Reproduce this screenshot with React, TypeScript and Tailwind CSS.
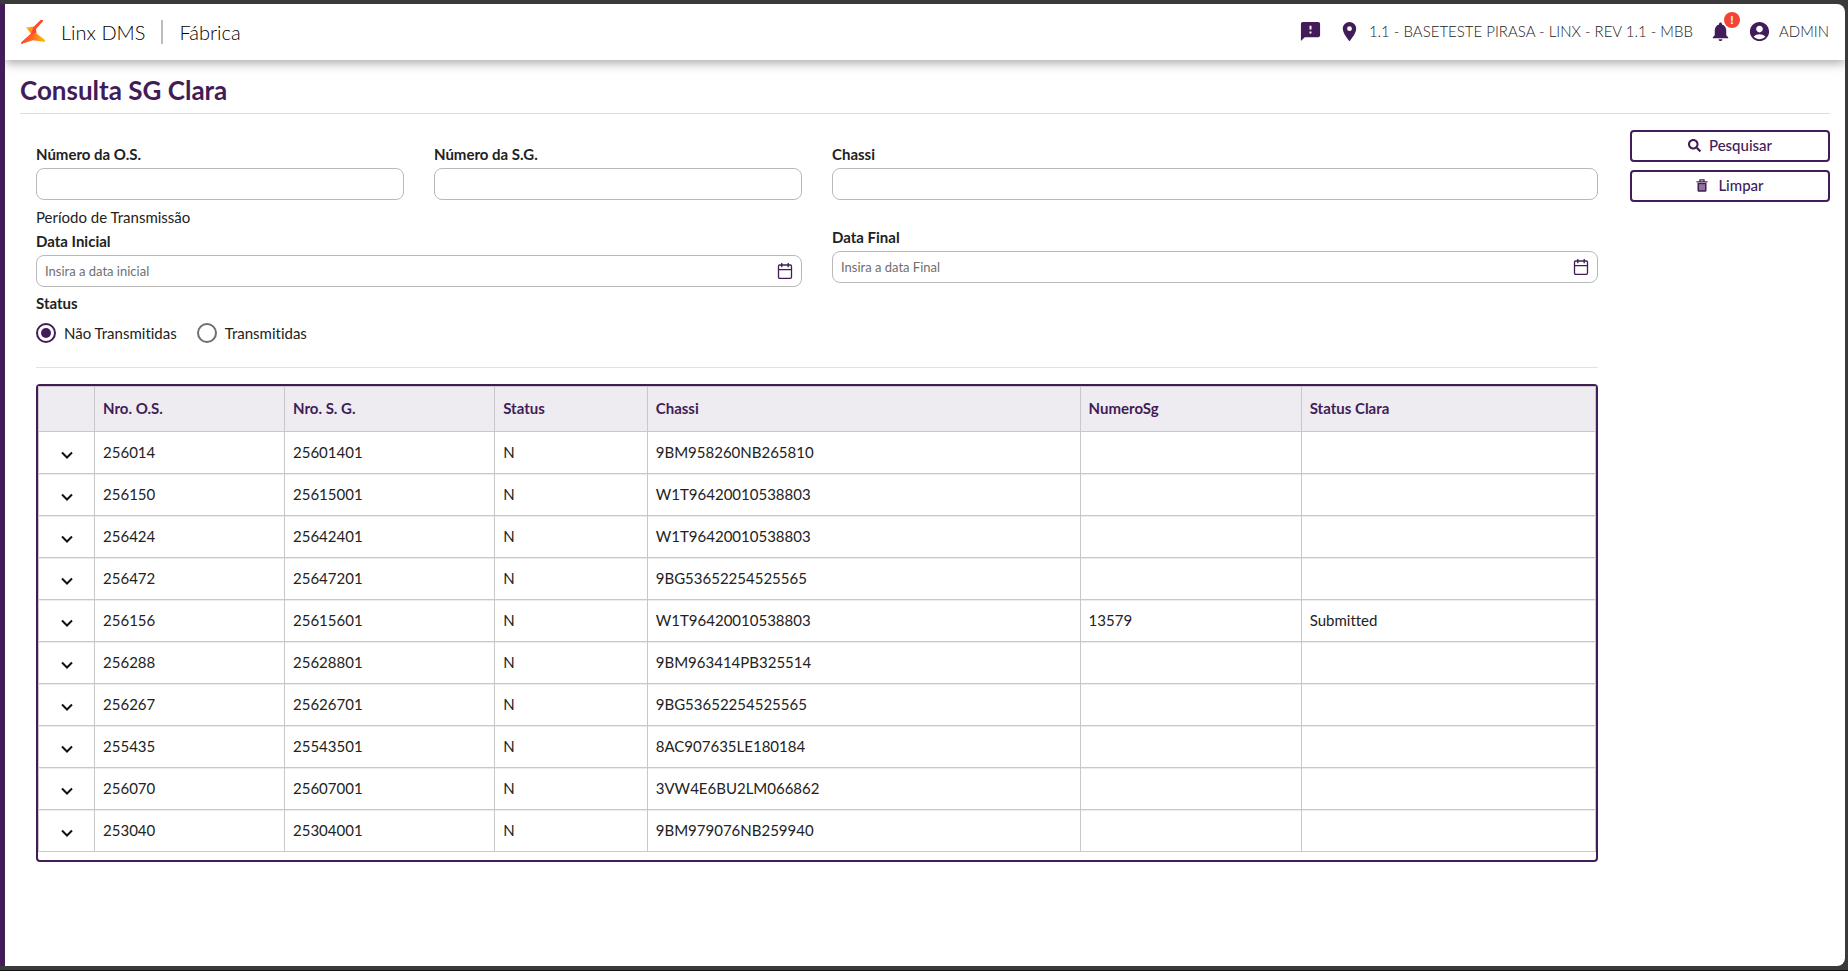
import React, { useState } from 'react';
import { MdFeedback, MdLocationOn, MdNotifications, MdAccountCircle } from 'react-icons/md';
import { FaSearch } from 'react-icons/fa';

interface Order {
  os: string;
  sg: string;
  status: string;
  chassi: string;
  numeroSg?: string;
  statusClara?: string;
}

const orders: Order[] = [
  { os: '256014', sg: '25601401', status: 'N', chassi: '9BM958260NB265810' },
  { os: '256150', sg: '25615001', status: 'N', chassi: 'W1T96420010538803' },
  { os: '256424', sg: '25642401', status: 'N', chassi: 'W1T96420010538803' },
  { os: '256472', sg: '25647201', status: 'N', chassi: '9BG53652254525565' },
  { os: '256156', sg: '25615601', status: 'N', chassi: 'W1T96420010538803', numeroSg: '13579', statusClara: 'Submitted' },
  { os: '256288', sg: '25628801', status: 'N', chassi: '9BM963414PB325514' },
  { os: '256267', sg: '25626701', status: 'N', chassi: '9BG53652254525565' },
  { os: '255435', sg: '25543501', status: 'N', chassi: '8AC907635LE180184' },
  { os: '256070', sg: '25607001', status: 'N', chassi: '3VW4E6BU2LM066862' },
  { os: '253040', sg: '25304001', status: 'N', chassi: '9BM979076NB259940' },
];

const columns = ['Nro. O.S.', 'Nro. S. G.', 'Status', 'Chassi', 'NumeroSg', 'Status Clara'];

const Logo = () => (
  <svg viewBox="0 0 24 24" className="size-6" aria-hidden="true">
    <defs>
      <linearGradient id="wing" x1="0" y1="0" x2="1" y2="0.4">
        <stop offset="0" stopColor="#ffc20e" />
        <stop offset="1" stopColor="#ff7a1a" />
      </linearGradient>
      <linearGradient id="foot" x1="0" y1="0" x2="1" y2="0">
        <stop offset="0" stopColor="#ff4b2b" />
        <stop offset="0.5" stopColor="#ff6a22" />
        <stop offset="1" stopColor="#ffc400" />
      </linearGradient>
    </defs>
    <path d="M5 7.5 L14 6.5 L15 13 L10 13.5 Z" fill="url(#wing)" />
    <path d="M22 0 H19.5 L12.5 7 L10 13.5 L0 22.5 V24 L11 19.5 L15.5 13 L15 9 L22 1.2 Z" fill="#ff4a2a" />
    <path d="M0 24 L9.5 15.5 L14.5 12.8 L24 20 V22 L12 20.3 Z" fill="url(#foot)" />
  </svg>
);

const CalendarIcon = () => (
  <svg viewBox="0 0 16 18" className="h-[18px] w-4" fill="none" stroke="#411c58" strokeWidth="1.3" aria-hidden="true">
    <rect x="1.5" y="3" width="13" height="13.3" rx="1.2" />
    <path d="M1.5 7.7h13M4.8 1v4.2M11.2 1v4.2" />
  </svg>
);

const TrashIcon = () => (
  <svg viewBox="0 0 12 13" className="mr-0.5 h-[13px] w-3" aria-hidden="true">
    <path d="M1.5 4h9v7.6a1.2 1.2 0 0 1-1.2 1.2H2.7a1.2 1.2 0 0 1-1.2-1.2z" fill="#411c58" />
    <path d="M0.5 2.8h11M4 2.5V0.8h4v1.7" stroke="#411c58" strokeWidth="1.3" fill="none" />
    <path d="M4 5.2v6M6 5.2v6M8 5.2v6" stroke="#fff" strokeWidth="0.8" />
  </svg>
);

const Chevron = () => (
  <svg viewBox="0 0 12 8" className="h-2 w-3" fill="none" stroke="#111" strokeWidth="2" aria-hidden="true">
    <path d="M1 1.5l5 5 5-5" />
  </svg>
);

const inputClass = 'h-8 w-full rounded-lg border border-[#b9b9b9] bg-white px-2 text-[13px] text-[#222] outline-none placeholder:text-[#6f6f6f]';
const labelClass = 'mb-1 block text-[15px] leading-5 font-bold';
const cellClass = 'border border-[#c8c8c8] px-2 pb-0.5';

const Field = ({ id, label, className = '' }: any) => (
  <div className={className}>
    <label htmlFor={id} className={labelClass}>{label}</label>
    <input id={id} type="text" className={inputClass} />
  </div>
);

const DateField = ({ id, label, placeholder }: any) => (
  <div>
    <label htmlFor={id} className={labelClass}>{label}</label>
    <div className="relative">
      <input id={id} type="text" placeholder={placeholder} className={inputClass} />
      <button type="button" aria-label="Abrir calendário" className="absolute top-[7px] right-[9px]">
        <CalendarIcon />
      </button>
    </div>
  </div>
);

const StatusRadio = ({ label, checked, onChange }: any) => (
  <label className="flex items-center gap-2 text-[15px] leading-5">
    <input
      type="radio"
      name="status"
      checked={checked}
      onChange={onChange}
      className="size-5 appearance-none rounded-full border-2 border-[#6f6f6f] bg-clip-content p-[3px] checked:border-[#411c58] checked:bg-[#411c58]"
    />
    {label}
  </label>
);

const ActionButton = ({ icon, label }: any) => (
  <button type="button" className="flex h-8 w-full items-center justify-center gap-2 rounded border-2 border-[#411c58] bg-white pb-0.5 text-[15px] leading-5 font-medium text-[#411c58]">
    {icon}
    {label}
  </button>
);

const Header = () => (
  <header className="relative flex h-14 items-center justify-between px-4 shadow-[0_3px_10px_rgba(0,0,0,0.35)]">
    <div className="flex items-center text-xl leading-8 font-light text-black">
      <Logo />
      <span className="ml-4">Linx DMS</span>
      <span className="mx-4 h-6 w-0.5 bg-[#bdbdbd]" />
      <span>Fábrica</span>
    </div>
    <div className="flex items-center pb-0.5 text-[15px] leading-5 font-light text-[#222]">
      <MdFeedback size={23} color="#411c58" />
      <MdLocationOn size={23} color="#411c58" className="mr-2 ml-4" />
      <span>1.1 - BASETESTE PIRASA - LINX - REV 1.1 - MBB</span>
      <button type="button" aria-label="Notificações" className="relative ml-4">
        <MdNotifications size={23} color="#411c58" />
        <span className="absolute -top-2 -right-2 flex size-4 items-center justify-center rounded-full bg-[#f44336] text-xs font-bold text-white">!</span>
      </button>
      <MdAccountCircle size={23} color="#411c58" className="mr-2 ml-4" />
      <span>ADMIN</span>
    </div>
  </header>
);

const OrdersTable = () => (
  <div className="rounded-sm border-2 border-[#411c58] pb-2">
    <table className="w-full table-fixed border-collapse text-left text-[15px] leading-5">
      <colgroup>
        <col className="w-[3.6%]" />
        <col className="w-[12.2%]" />
        <col className="w-[13.5%]" />
        <col className="w-[9.8%]" />
        <col className="w-[27.8%]" />
        <col className="w-[14.2%]" />
        <col className="w-[18.9%]" />
      </colgroup>
      <thead>
        <tr className="h-[45px] bg-[#efecf1] text-[#411c58]">
          <th className={cellClass} />
          {columns.map((name) => (
            <th key={name} className={cellClass}>{name}</th>
          ))}
        </tr>
      </thead>
      <tbody>
        {orders.map((order) => (
          <tr key={order.os} className="h-[42px] [&:not(:first-child)>td]:shadow-[inset_0_1px_#ececec]">
            <td className="border border-[#c8c8c8] text-center">
              <button type="button" aria-label="Expandir" className="align-middle">
                <Chevron />
              </button>
            </td>
            <td className={cellClass}>{order.os}</td>
            <td className={cellClass}>{order.sg}</td>
            <td className={cellClass}>{order.status}</td>
            <td className={cellClass}>{order.chassi}</td>
            <td className={cellClass}>{order.numeroSg}</td>
            <td className={cellClass}>{order.statusClara}</td>
          </tr>
        ))}
      </tbody>
    </table>
  </div>
);

export default function App() {
  const [status, setStatus] = useState('nao');

  return (
    <div className="flex min-h-screen flex-col border-b border-[#111] bg-[#3a3a3a] pt-1 pr-[3px] pb-1 font-['Lato','Liberation_Sans',sans-serif] text-[#222] [font-variant-ligatures:none]">
      <div className="flex-1 overflow-hidden rounded-r-lg border-l-[5px] border-[#411c58] bg-white">
        <Header />
        <main className="px-[15px]">
          <h1 className="border-b border-[#ddd] pt-[14px] pb-[7px] text-[26px] leading-8 font-bold text-[#411c58]">Consulta SG Clara</h1>
          <div className="flex gap-8 pt-4">
            <div className="min-w-0 flex-1 pl-4">
              <div className="grid grid-cols-4 gap-x-[30px] pt-[14px]">
                <Field id="os" label="Número da O.S." />
                <Field id="sg" label="Número da S.G." />
                <Field id="chassi" label="Chassi" className="col-span-2" />
              </div>
              <div className="grid grid-cols-2 gap-x-[30px] pt-[7px]">
                <div>
                  <p className="mb-1 text-[15px] leading-5">Período de Transmissão</p>
                  <DateField id="inicio" label="Data Inicial" placeholder="Insira a data inicial" />
                </div>
                <div className="pt-5">
                  <DateField id="fim" label="Data Final" placeholder="Insira a data Final" />
                </div>
              </div>
              <fieldset className="border-b border-[#e2e2e2] pt-1 pb-6">
                <legend className="contents text-[15px] leading-5 font-bold">Status</legend>
                <div className="flex gap-5 pt-2">
                  <StatusRadio label="Não Transmitidas" checked={status === 'nao'} onChange={() => setStatus('nao')} />
                  <StatusRadio label="Transmitidas" checked={status === 'sim'} onChange={() => setStatus('sim')} />
                </div>
              </fieldset>
              <div className="pt-4">
                <OrdersTable />
              </div>
            </div>
            <div className="flex w-[200px] flex-col gap-2">
              <ActionButton icon={<FaSearch size={13} />} label="Pesquisar" />
              <ActionButton icon={<TrashIcon />} label="Limpar" />
            </div>
          </div>
        </main>
      </div>
    </div>
  );
}
